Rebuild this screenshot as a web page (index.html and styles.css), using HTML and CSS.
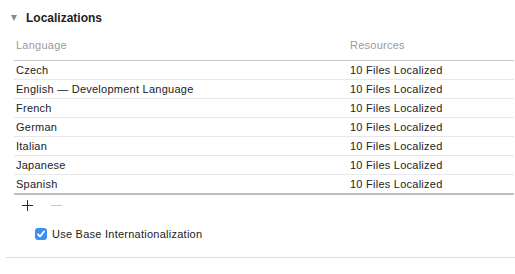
FILE: index.html
```html
<!DOCTYPE html>
<html lang="en">
<head>
  <meta charset="UTF-8" />
  <title>Localizations</title>
  <link rel="stylesheet" href="styles.css">
</head>
<body>
  <section class="panel">
    <div class="panel-head">
      <span class="disclosure"></span>
      <span class="panel-title">Localizations</span>
    </div>

    <table class="loc-table">
      <thead>
        <tr>
          <th class="col-lang">Language</th>
          <th>Resources</th>
        </tr>
      </thead>
      <tbody>
        <tr><td>Czech</td><td>10 Files Localized</td></tr>
        <tr><td>English — Development Language</td><td>10 Files Localized</td></tr>
        <tr><td>French</td><td>10 Files Localized</td></tr>
        <tr><td>German</td><td>10 Files Localized</td></tr>
        <tr><td>Italian</td><td>10 Files Localized</td></tr>
        <tr><td>Japanese</td><td>10 Files Localized</td></tr>
        <tr><td>Spanish</td><td>10 Files Localized</td></tr>
      </tbody>
    </table>

    <div class="table-tools">
      <button class="tool-btn" title="Add">
        <svg width="11" height="11" viewBox="0 0 11 11"><path d="M5.5 0v11M0 5.5h11" stroke="#2b2b2b" stroke-width="1"/></svg>
      </button>
      <button class="tool-btn" title="Remove" disabled>
        <svg width="11" height="11" viewBox="0 0 11 11"><path d="M0 5.5h11" stroke="#c4c4c4" stroke-width="1"/></svg>
      </button>
    </div>

    <label class="check-row">
      <span class="checkbox">
        <svg width="12" height="12" viewBox="0 0 12 12"><path d="M3 6.3l2 2.2 4-5" fill="none" stroke="#fff" stroke-width="1.8" stroke-linecap="round" stroke-linejoin="round"/></svg>
      </span>
      Use Base Internationalization
    </label>
  </section>
  <div class="separator"></div>
</body>
</html>
```

FILE: styles.css
```css
body {
  margin: 0;
  font-family: 'Liberation Sans', Arial, sans-serif;
  font-size: 11px;
  letter-spacing: 0.25px;
  color: #222;
  background-color: #ffffff;
}

.panel-head {
  display: flex;
  align-items: center;
  height: 16px;
  margin-top: 10px;
  padding-left: 11px;
}

.disclosure {
  width: 0;
  height: 0;
  border-left: 3.5px solid transparent;
  border-right: 3.5px solid transparent;
  border-top: 6px solid #8a8a8a;
  margin-right: 9px;
}

.panel-title {
  font-weight: bold;
  font-size: 12px;
  letter-spacing: 0;
  color: #1e1e1e;
}

.loc-table {
  border-collapse: collapse;
  margin: 12px 1px 0 14px;
  width: 500px;
}

.loc-table th {
  font-weight: normal;
  text-align: left;
  color: #9a9a9a;
  line-height: 14px;
  padding: 0 2px 8px 2px;
  border-bottom: 1px solid #c6c6c6;
}

.loc-table .col-lang {
  width: 330px;
}

.loc-table td {
  height: 18px;
  padding: 0 2px;
  line-height: 18px;
  border-bottom: 1px solid #e8e8e8;
}

.loc-table tr:last-child td {
  border-bottom: 2px solid #bdbdbd;
}

.table-tools {
  display: flex;
  align-items: center;
  height: 18px;
  margin-top: 1px;
  padding-left: 22px;
  gap: 18px;
}

.tool-btn {
  border: none;
  background: none;
  padding: 0;
  display: flex;
}

.check-row {
  display: flex;
  align-items: center;
  height: 16px;
  margin-top: 12px;
  padding-left: 35px;
  color: #222;
}

.checkbox {
  width: 12px;
  height: 12px;
  border-radius: 3px;
  background: #3d8ff6;
  display: flex;
  margin-right: 5px;
}

.separator {
  height: 1px;
  background: #dcdcdc;
  margin: 15px 0 0 6px;
}
```
